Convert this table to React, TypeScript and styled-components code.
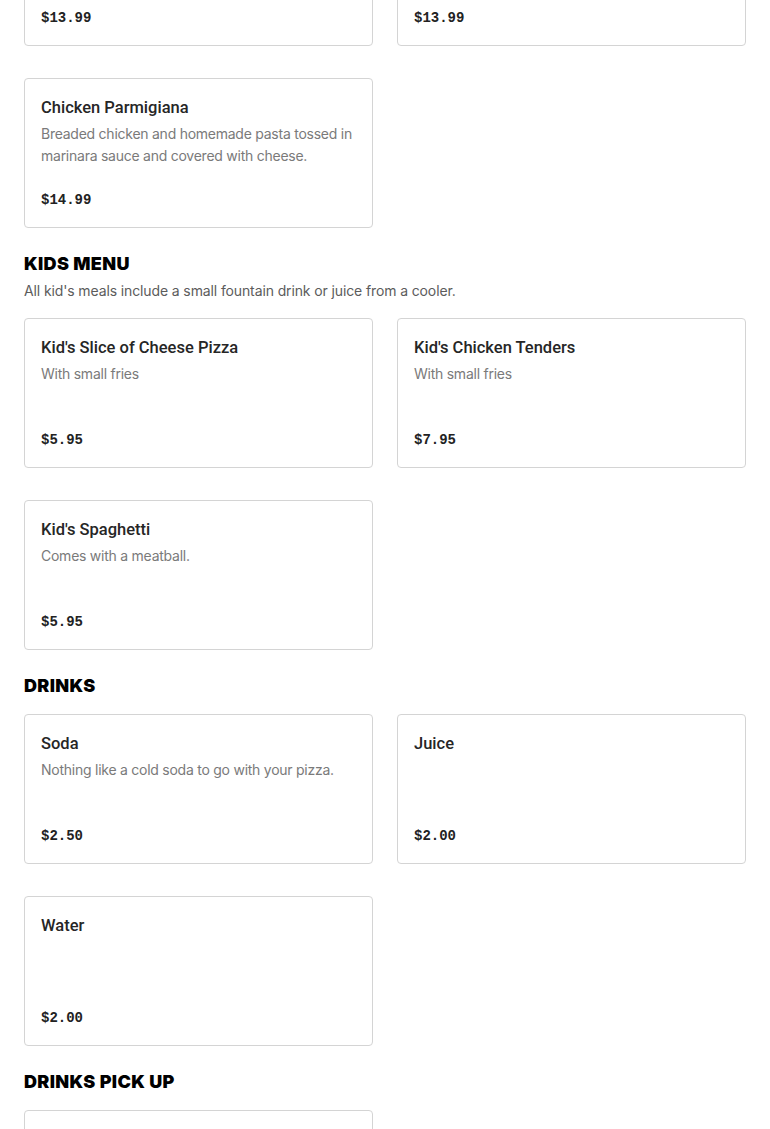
import React from "react";
import styled, { createGlobalStyle } from "styled-components";

const GlobalStyle = createGlobalStyle`
  html, body { margin: 0; padding: 0; background: #ffffff; }
  body { font-family: "Inter", "Liberation Sans", sans-serif; overflow: hidden; }
  * { box-sizing: border-box; }
`;

const Page = styled.main`
  padding: 0 24px;
  margin-top: -104px;
  display: flex;
  flex-direction: column;
  gap: 24px;
`;

const Section = styled.section`
  display: flex;
  flex-direction: column;
`;

const Header = styled.header`
  display: flex;
  flex-direction: column;
  gap: 4px;
  margin-bottom: 16px;
`;

const Heading = styled.h2`
  margin: 0;
  font-family: "Inter", "Liberation Sans", sans-serif;
  font-weight: 900;
  font-size: 18px;
  line-height: 24px;
  letter-spacing: 0.35px;
  color: #000;
  text-transform: uppercase;
`;

const Subtitle = styled.p`
  margin: 0;
  font-size: 14px;
  line-height: 22px;
  letter-spacing: -0.12px;
  color: #5c5c5c;
`;

const Grid = styled.div`
  display: grid;
  grid-template-columns: 1fr 1fr;
  column-gap: 24px;
  row-gap: 32px;
`;

const Card = styled.article`
  height: 150px;
  border: 1px solid #d4d4d4;
  border-radius: 4px;
  padding: 17px 16px 15px;
  display: flex;
  flex-direction: column;
  background: #fff;
`;

const Title = styled.h3`
  margin: 0;
  font-family: "Roboto", "Inter", sans-serif;
  font-size: 16.5px;
  line-height: 24px;
  font-weight: 500;
  color: #262626;
`;

const Desc = styled.p`
  margin: 3px 0 0;
  font-size: 14px;
  line-height: 22px;
  letter-spacing: -0.25px;
  color: #7a7a7a;
`;

const Price = styled.div`
  margin-top: auto;
  font-family: "Liberation Mono", "DejaVu Sans Mono", monospace;
  font-weight: 700;
  font-size: 14px;
  line-height: 24px;
  color: #222;
`;

type Item = { name: string; desc?: string; price: string };
type Sec = { title?: string; subtitle?: string; items: Item[] };

const sections: Sec[] = [
  {
    items: [
      { name: "Spaghetti and Meatballs", desc: "Homemade pasta with marinara sauce.", price: "$13.99" },
      { name: "Fettuccine Alfredo", desc: "Homemade pasta in a creamy alfredo sauce.", price: "$13.99" },
      {
        name: "Chicken Parmigiana",
        desc: "Breaded chicken and homemade pasta tossed in marinara sauce and covered with cheese.",
        price: "$14.99",
      },
    ],
  },
  {
    title: "Kids Menu",
    subtitle: "All kid's meals include a small fountain drink or juice from a cooler.",
    items: [
      { name: "Kid's Slice of Cheese Pizza", desc: "With small fries", price: "$5.95" },
      { name: "Kid's Chicken Tenders", desc: "With small fries", price: "$7.95" },
      { name: "Kid's Spaghetti", desc: "Comes with a meatball.", price: "$5.95" },
    ],
  },
  {
    title: "Drinks",
    items: [
      { name: "Soda", desc: "Nothing like a cold soda to go with your pizza.", price: "$2.50" },
      { name: "Juice", price: "$2.00" },
      { name: "Water", price: "$2.00" },
    ],
  },
  {
    title: "Drinks Pick Up",
    items: [{ name: "Soda Pick Up", desc: "Grab a can from the cooler.", price: "$2.50" }],
  },
];

export default function App() {
  return (
    <>
      <GlobalStyle />
      <Page>
        {sections.map((s, i) => (
          <Section key={i}>
            {s.title && (
              <Header>
                <Heading>{s.title}</Heading>
                {s.subtitle && <Subtitle>{s.subtitle}</Subtitle>}
              </Header>
            )}
            <Grid>
              {s.items.map((it) => (
                <Card key={it.name}>
                  <Title>{it.name}</Title>
                  {it.desc && <Desc>{it.desc}</Desc>}
                  <Price>{it.price}</Price>
                </Card>
              ))}
            </Grid>
          </Section>
        ))}
      </Page>
    </>
  );
}
